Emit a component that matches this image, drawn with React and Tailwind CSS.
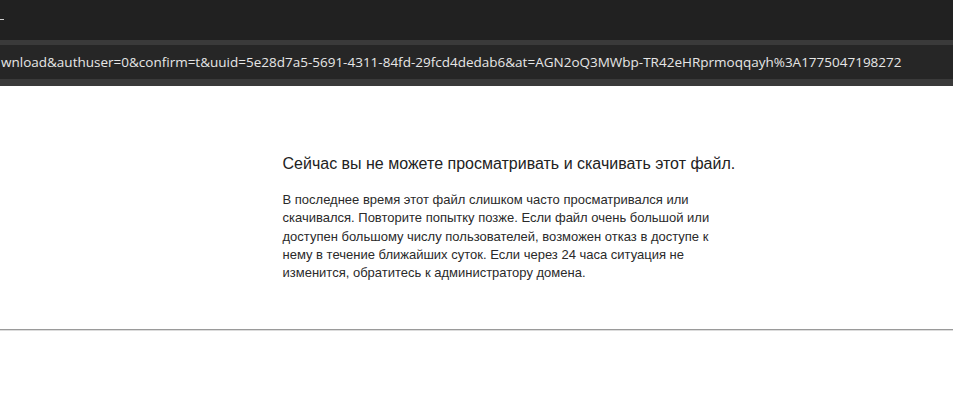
import React from 'react';

const url = 'wnload&authuser=0&confirm=t&uuid=5e28d7a5-5691-4311-84fd-29fcd4dedab6&at=AGN2oQ3MWbp-TR42eHRprmoqqayh%3A1775047198272';

function App() {
  return (
    <div className="min-h-[416px] w-full bg-white flex flex-col">
      {/* browser chrome */}
      <div className="h-[40px] bg-[#212121] flex items-center">
        <span className="block w-[4px] h-[1px] bg-[#cfcfcf] mt-[-2px]"></span>
      </div>
      <div className="h-[5px] bg-[#3a3a3a]"></div>
      <div className="h-[34px] bg-[#262626] flex items-center overflow-hidden">
        <span className="whitespace-nowrap text-[13.5px] text-[#e6e6e6] font-['Open_Sans',sans-serif] pl-[1px]">
          {url}
        </span>
      </div>
      <div className="h-[7px] bg-[#3a3a3a]"></div>

      {/* page */}
      <div className="h-[243px] flex justify-center">
        <div className="w-[452px] ml-[64px] pt-[68px] font-['Liberation_Sans',Arial,sans-serif]">
          <h1 className="text-[16px] text-[#222] leading-[20px] whitespace-nowrap">
            Сейчас вы не можете просматривать и скачивать этот файл.
          </h1>
          <p className="mt-[17px] text-[13px] leading-[18.3px] text-[#2a2a2a] w-[440px]">
            В последнее время этот файл слишком часто просматривался или скачивался. Повторите попытку позже. Если файл очень большой или доступен большому числу пользователей, возможен отказ в доступе к нему в течение ближайших суток. Если через 24 часа ситуация не изменится, обратитесь к администратору домена.
          </p>
        </div>
      </div>
      <div className="border-t border-t-[#9a9a9a] border-b border-b-[#dcdcdc]"></div>
    </div>
  );
}

export default App;
